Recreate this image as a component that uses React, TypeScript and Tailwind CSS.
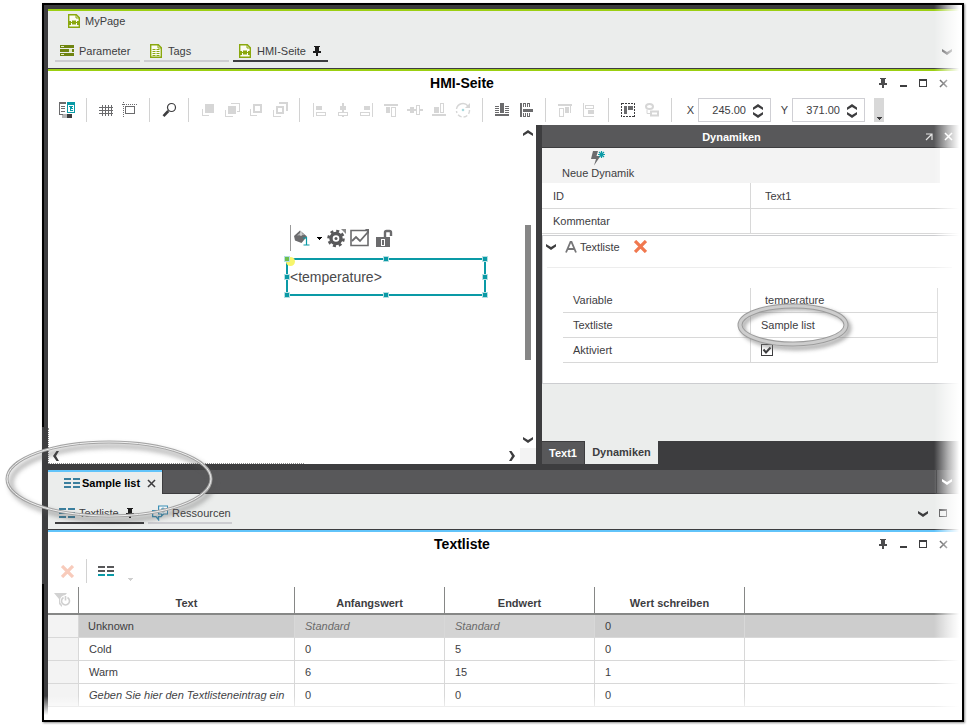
import type { ReactNode } from "react";

const GREY = "#6b6b6d";
const LIGHT = "#d6d6d6";
const DARK = "#3d3d3f";
const TEAL = "#0a9aa6";
const OLIVE = "#8aa80e";

function Icon({ children, w = 16, h = 16, smooth = false }: { children: ReactNode; w?: number; h?: number; smooth?: boolean }) {
  return (
    <svg
      width={w}
      height={h}
      viewBox={`0 0 ${w} ${h}`}
      fill="none"
      shapeRendering={smooth ? "auto" : "crispEdges"}
      className="block shrink-0"
      aria-hidden="true"
    >
      {children}
    </svg>
  );
}

function PageIcon() {
  return (
    <Icon w={12} h={14} smooth>
      <path d="M.7.7h7.6l3 3v9.6H.7z" stroke={OLIVE} strokeWidth="1.4" fill="#fbfcf3" />
      <path d="M8 .7v3.300h3.500" stroke={OLIVE} />
      <path d="M1 7h2v4H1zM9 7h2v4H9zM4 6.500h4v4H4z" fill={OLIVE} />
      <path d="M3 8.500h1M8 8.500h1" stroke={OLIVE} />
    </Icon>
  );
}

function ParameterIcon() {
  return (
    <Icon w={14} h={12}>
      <path d="M0 0h14v3H0zM0 4h14v3H0zM0 8h14v3H0z" fill="#6f8410" />
      <path d="M1 1h3v1H1zM9 4h3v3H9zM1 9h3v1H1z" fill="#e3ebc3" />
    </Icon>
  );
}

function TagsIcon() {
  return (
    <Icon w={12} h={14} smooth>
      <path d="M.7.7h7.6l3 3v9.6H.7z" stroke={OLIVE} strokeWidth="1.4" fill="#fbfcf3" />
      <path d="M8 .7v3.300h3.500" stroke={OLIVE} />
      <path d="M2.500 5.500h3M6.500 5.500h3M2.500 7.500h3M6.500 7.500h3M2.500 9.500h3M6.500 9.500h3M2.500 11.500h3M6.500 11.500h3" stroke={OLIVE} />
    </Icon>
  );
}

function Pin({ color = DARK }: { color?: string }) {
  return (
    <Icon w={8} h={10}>
      <path d="M1 0h6v1H1zM2 1h4v4H2zM0 5h8v2H0zM3 7h2v3H3z" fill={color} />
    </Icon>
  );
}

function Chevron({ dir, color = DARK }: { dir: "up" | "down" | "left" | "right"; color?: string }) {
  const d = {
    up: "M0 8V5.500L5 2l5 3.500V8L5 5z",
    down: "M0 2v2.500L5 8l5-3.500V2L5 5z",
    left: "M8 0H5.500L2 5l3.500 5H8L5 5z",
    right: "M2 0h2.500L8 5l-3.500 5H2l3-5z",
  }[dir];
  return (
    <Icon w={10} h={10} smooth>
      <path d={d} fill={color} />
    </Icon>
  );
}

function Cross({ color, size = 12, stroke = 4 }: { color: string; size?: number; stroke?: number }) {
  return (
    <svg width={size} height={size} viewBox="0 0 12 12" className="block shrink-0" aria-hidden="true">
      <path d="M2 2l8 8M10 2l-8 8" stroke={color} strokeWidth={stroke} strokeLinecap="square" />
    </svg>
  );
}

function ListIcon({ top = "#3a7f9e", bottom = "#3a7f9e" }: { top?: string; bottom?: string }) {
  return (
    <Icon w={16} h={10}>
      <path d="M0 0h7v2H0zM9 0h7v2H9zM0 4h7v2H0zM9 4h7v2H9z" fill={top} />
      <path d="M0 8h7v2H0zM9 8h7v2H9z" fill={bottom} />
    </Icon>
  );
}

const tools: { label: string; off?: boolean; art: ReactNode }[][] = [
  [
    {
      label: "Vorlage",
      art: (
        <Icon>
          <path d="M0 0h7v2H1v10h6v1H0zM2 4h4v1H2zM2 6h4v1H2zM2 9h4v1H2z" fill={GREY} />
          <path d="M8 0h8v11h-8V2h1v8h6V3H9z" fill={TEAL} />
          <path d="M10 4h4v1h-1v1h-1v3h-1V5h-1zM12 6h2v1h-2zM12 8h2v1h-2z" fill={TEAL} />
          <rect x="3" y="12" width="10" height="4" rx="2" fill="#b5b5b5" />
          <rect x="8" y="12" width="5" height="4" rx="1" fill={DARK} />
        </Icon>
      ),
    },
  ],
  [
    {
      label: "Raster",
      art: (
        <Icon>
          <path d="M4.500 3v11M7.500 3v11M10.500 3v11M13.500 3v11M1 5.500h14M1 8.500h14M1 11.500h14" stroke={GREY} />
        </Icon>
      ),
    },
    {
      label: "Fangen",
      art: (
        <Icon>
          <path d="M3 4h10v1H3zM3 4h1v8H3zM12 4h1v8h-1zM3 11h10v1H3z" fill={GREY} />
          <path d="M0 2.500h16M1.500 0v16" stroke={GREY} strokeDasharray="1 1" />
        </Icon>
      ),
    },
  ],
  [
    {
      label: "Zoom",
      art: (
        <Icon smooth>
          <circle cx="10.500" cy="5.500" r="4" stroke={DARK} strokeWidth="1.200" />
          <path d="M7.300 9L2.500 14.200" stroke={DARK} strokeWidth="2.600" />
        </Icon>
      ),
    },
  ],
  [
    {
      label: "Ganz nach vorne",
      off: true,
      art: (
        <Icon>
          <path d="M5 2h9v9H5z" fill={LIGHT} />
          <path d="M2 7h1v6h6v1H2z" fill={LIGHT} />
        </Icon>
      ),
    },
    {
      label: "Nach vorne",
      off: true,
      art: (
        <Icon>
          <path d="M4 4h8v8H4zM7 1h9v9h-3V9h2V2H7zM1 8h1v6h7v1H1z" fill={LIGHT} />
        </Icon>
      ),
    },
    {
      label: "Nach hinten",
      off: true,
      art: (
        <Icon>
          <path d="M5 2h9v9H5zm2 2v5h5V4z" fillRule="evenodd" fill={LIGHT} />
          <path d="M2 7h1v6h6v1H2z" fill={LIGHT} />
        </Icon>
      ),
    },
    {
      label: "Ganz nach hinten",
      off: true,
      art: (
        <Icon>
          <path d="M4 4h8v8H4zm2 2v4h4V6z" fillRule="evenodd" fill={LIGHT} />
          <path d="M7 0h9v9h-2V2H7zM1 8h1v6h7v1H1z" fill={LIGHT} />
        </Icon>
      ),
    },
  ],
  [
    {
      label: "Links ausrichten",
      off: true,
      art: (
        <Icon>
          <path d="M2 1h1v14H2zM5 4h6v4H5z" fill={LIGHT} />
          <path d="M5.500 10.500h9v3h-9z" stroke={LIGHT} />
        </Icon>
      ),
    },
    {
      label: "Horizontal zentrieren",
      off: true,
      art: (
        <Icon>
          <path d="M5 4h6v4H5zM7 1h2v3H7zM7 8h2v2H7zM7 13h2v2H7z" fill={LIGHT} />
          <path d="M3.500 10.500h9v3h-9z" stroke={LIGHT} />
        </Icon>
      ),
    },
    {
      label: "Rechts ausrichten",
      off: true,
      art: (
        <Icon>
          <path d="M13 1h1v14h-1zM5 4h6v4H5z" fill={LIGHT} />
          <path d="M1.500 10.500h9v3h-9z" stroke={LIGHT} />
        </Icon>
      ),
    },
    {
      label: "Oben ausrichten",
      off: true,
      art: (
        <Icon>
          <path d="M1 2h14v2H1zM3 5h4v6H3z" fill={LIGHT} />
          <path d="M8.500 5.500h4v9h-4z" stroke={LIGHT} />
        </Icon>
      ),
    },
    {
      label: "Vertikal zentrieren",
      off: true,
      art: (
        <Icon>
          <path d="M3 5h4v6H3zM0 7h3v2H0zM7 7h2v2H7zM13 7h3v2h-3z" fill={LIGHT} />
          <path d="M9.500 3.500h3v9h-3z" stroke={LIGHT} />
        </Icon>
      ),
    },
    {
      label: "Unten ausrichten",
      off: true,
      art: (
        <Icon>
          <path d="M1 12h14v2H1zM3 5h5v6H3z" fill={LIGHT} />
          <path d="M9.500 1.500h3v9h-3z" stroke={LIGHT} />
        </Icon>
      ),
    },
    {
      label: "Drehen",
      off: true,
      art: (
        <Icon smooth>
          <path d="M1.500 7A6.500 6.500 0 0 1 13 4" stroke={LIGHT} strokeWidth="1.400" />
          <path d="M15 1v5h-5z" fill={LIGHT} />
          <path d="M14.500 8A6.500 6.500 0 0 1 1.500 9" stroke={LIGHT} strokeWidth="1.400" strokeDasharray="4 2" />
          <circle cx="8" cy="8" r="1.300" fill="#a9d9dd" />
        </Icon>
      ),
    },
  ],
  [
    {
      label: "Gleiche Breite",
      art: (
        <Icon>
          <path d="M1 12h14v2H1zM6 1h4v10H6z" fill={GREY} />
          <path d="M1 4h4v1H1zM1 6h4v1H1zM1 8h4v1H1zM1 10h4v1H1zM11 4h4v1h-4zM11 6h4v1h-4zM11 8h4v1h-4zM11 10h4v1h-4z" fill={GREY} />
        </Icon>
      ),
    },
    {
      label: "Gleiche Höhe",
      art: (
        <Icon>
          <path d="M2 1h2v14H2zM5 7h10v3H5z" fill={GREY} />
          <path d="M5 1h1v4H5zM7 1h1v4H7zM9 1h1v4H9zM11 1h1v4h-1zM5 1h3v1H5zM9 1h3v1H9zM5 11h1v4H5zM7 11h1v4H7zM9 11h1v4H9zM11 11h1v4h-1zM5 14h3v1H5zM9 14h3v1H9z" fill={GREY} />
        </Icon>
      ),
    },
  ],
  [
    {
      label: "Horizontal verteilen",
      off: true,
      art: (
        <Icon>
          <path d="M1 2h14v2H1zM8 5h4v6H8zM13 4h1v7h-1z" fill={LIGHT} />
          <path d="M2.500 6.500h4v8h-4z" stroke={LIGHT} />
        </Icon>
      ),
    },
    {
      label: "Vertikal verteilen",
      off: true,
      art: (
        <Icon>
          <path d="M2 1h1v14H2zM7 8h6v4H7zM3 14h10v1H3z" fill={LIGHT} />
          <path d="M4.500 3.500h8v3h-8z" stroke={LIGHT} />
        </Icon>
      ),
    },
  ],
  [
    {
      label: "Gruppieren",
      art: (
        <Icon>
          <path d="M1.500 1.500h13v13h-13z" stroke={DARK} strokeDasharray="2 1" />
          <path d="M4 4h3v8H4zM8 4h5v4H8z" fill={GREY} />
        </Icon>
      ),
    },
    {
      label: "Gruppierung aufheben",
      off: true,
      art: (
        <Icon smooth>
          <ellipse cx="5.500" cy="4.500" rx="3.500" ry="2.500" stroke={LIGHT} strokeWidth="2" />
          <path d="M7 9.500h7v4H7z" stroke={LIGHT} strokeWidth="2" />
          <path d="M3 8v3.500h3" stroke={LIGHT} />
        </Icon>
      ),
    },
  ],
];

function Separator() {
  return <span className="mx-[11px] h-6 w-px shrink-0 bg-[#d2d2d2]" />;
}

function Coordinate({ id, value }: { id: string; value: string }) {
  return (
    <>
      <label htmlFor={id} className="w-[15px] shrink-0 text-center">
        {id}
      </label>
      <div className="flex h-6 w-[73px] shrink-0 items-center border border-[#cfcfd4] bg-white">
        <input id={id} defaultValue={value} className="min-w-0 flex-1 bg-transparent text-right outline-none" />
        <div className="flex w-6 shrink-0 flex-col items-center">
          <button aria-label={`${id} erhöhen`} className="h-2">
            <Chevron dir="up" />
          </button>
          <button aria-label={`${id} verringern`} className="h-2">
            <Chevron dir="down" />
          </button>
        </div>
      </div>
    </>
  );
}

function PaneTitle({ children }: { children: ReactNode }) {
  return (
    <div className="flex h-6 items-center pl-[3px] pr-[9px]">
      <h2 className="flex-1 text-center text-sm font-bold text-black">{children}</h2>
      <button aria-label="Anheften" className="flex w-5 justify-center">
        <Pin color="#4c4c4e" />
      </button>
      <button aria-label="Minimieren" className="flex w-5 justify-center pt-[5px]">
        <span className="h-[2px] w-[7px] bg-[#3d3d3f]" />
      </button>
      <button aria-label="Maximieren" className="flex w-5 justify-center">
        <span className="size-2 border border-t-2 border-[#3d3d3f]" />
      </button>
      <button aria-label="Schließen" className="flex w-5 justify-center">
        <Cross color="#3d3d3f" size={9} stroke={2} />
      </button>
    </div>
  );
}

function SubTab({ icon, label, active = false, wide }: { icon: ReactNode; label: string; active?: boolean; wide: string }) {
  return (
    <button className={`flex h-5 items-center border-b-2 ${wide} ${active ? "border-[#3d3d3f]" : "border-[#cdcdd1]"}`}>
      <span className="flex w-6 justify-center">{icon}</span>
      <span>{label}</span>
      {active && (
        <span className="ml-[7px]">
          <Pin color="#1c1c1c" />
        </span>
      )}
    </button>
  );
}

const handles = [
  "-left-[4px] -top-[4px]",
  "left-[95px] -top-[4px]",
  "-right-[4px] -top-[4px]",
  "-left-[4px] top-[14px]",
  "-right-[4px] top-[14px]",
  "-left-[4px] -bottom-[4px]",
  "left-[95px] -bottom-[4px]",
  "-right-[4px] -bottom-[4px]",
];

function Canvas() {
  return (
    <div className="flex min-w-0 flex-1 flex-col bg-white">
      <div className="flex flex-1">
        <div className="relative flex-1">
          <div className="absolute left-[242px] top-[100px] flex h-[26px] items-center border-l border-[#9a9a9a] pl-[3px]">
            <button aria-label="Füllfarbe">
              <Icon smooth>
                <path d="M0 6L6 .5l7 6L7.500 13 1 10.500z" fill={GREY} />
                <path d="M3 5.500L7 2l3.500 3z" fill="#b4b4b4" />
                <path d="M7 1v5" stroke="#e8e8e8" />
                <path d="M9 8h4M12.500 7v8M9.500 15h6" stroke={TEAL} strokeWidth="1.200" />
              </Icon>
            </button>
            <button aria-label="Füllfarbe wählen" className="ml-[6px] mr-[5px]">
              <Icon w={6} h={3}>
                <path d="M0 0h6L3 3z" fill="#000" />
              </Icon>
            </button>
            <button aria-label="Einstellungen">
              <Icon w={20} h={20} smooth>
                <circle cx="9" cy="10.500" r="5" stroke="#58585a" strokeWidth="3.400" />
                <circle cx="9" cy="10.500" r="7.500" stroke="#58585a" strokeWidth="2.600" strokeDasharray="3 2.890" />
                <circle cx="9" cy="10.500" r="1.500" fill="#58585a" />
                <path d="M14 1h5v5z" fill="#8a8a8a" />
              </Icon>
            </button>
            <button aria-label="Dynamisieren" className="ml-[3px]">
              <Icon w={20} h={20} smooth>
                <path d="M1 2.500h17v15H1z" stroke={GREY} strokeWidth="1.600" />
                <path d="M2 13l4-4 4 4 8-9" stroke={GREY} strokeWidth="1.800" />
                <path d="M15 1h4v5z" fill={GREY} />
              </Icon>
            </button>
            <button aria-label="Entsperren" className="ml-[5px]">
              <Icon w={18} h={20} smooth>
                <path d="M1 9h14v10H1z" fill={GREY} />
                <path d="M10 10V4.500a1.500 1.500 0 0 1 1.500-1.500h3a1.500 1.500 0 0 1 1.500 1.500V8" stroke={GREY} strokeWidth="2.400" />
                <path d="M6 11h4v7H6z" fill="#fff" />
                <path d="M7 12h2v5H7z" fill={GREY} />
              </Icon>
            </button>
          </div>
          <div className="absolute left-[238px] top-[133px] flex h-[38px] w-[200px] items-center border-2 border-[#0a9aa6] pl-[2px]">
            <span className="absolute -left-[2px] -top-[3px] size-[9px] rounded-full bg-[#f7f56b]" />
            <span className="text-sm text-[#4a4a4c]">&lt;temperature&gt;</span>
            {handles.map((place, i) => (
              <span
                key={place}
                className={`absolute size-[6px] border border-[#b5dfe2] ${i === 0 ? "bg-[#6cc04a]" : "bg-[#0a9aa6]"} ${place}`}
              />
            ))}
          </div>
        </div>
        <div className="flex w-4 flex-col items-center">
          <button aria-label="Nach oben scrollen" className="flex h-4 items-center">
            <Chevron dir="up" />
          </button>
          <span className="mt-[84px] h-[135px] w-[6px] bg-[#868686]" />
          <button aria-label="Nach unten scrollen" className="mt-auto flex h-4 items-center">
            <Chevron dir="down" />
          </button>
        </div>
      </div>
      <div className="relative flex h-4 items-center pl-[3px]">
        <span className="absolute bottom-0 left-0 h-9 w-64 border-b border-l border-dotted border-[#8b8b8b]" />
        <button aria-label="Nach links scrollen">
          <Chevron dir="left" />
        </button>
        <span className="flex-1" />
        <button aria-label="Nach rechts scrollen">
          <Chevron dir="right" />
        </button>
        <span className="ml-[3px] h-4 w-4 bg-[#f3f3f3]" />
      </div>
    </div>
  );
}

function SampleMarker() {
  return (
    <svg className="pointer-events-none absolute -left-[26px] -top-[16px] z-10" width="126" height="60" aria-hidden="true">
      <defs>
        <filter id="soft-small" x="-20%" y="-20%" width="140%" height="140%">
          <feGaussianBlur stdDeviation="2" />
        </filter>
      </defs>
      <ellipse cx="61" cy="31" rx="53" ry="20" fill="none" stroke="#777" strokeWidth="4" opacity="0.700" filter="url(#soft-small)" />
      <ellipse cx="58" cy="28" rx="53" ry="19" fill="none" stroke="#9c9c9c" strokeWidth="5" />
      <ellipse cx="58" cy="28" rx="53" ry="19" fill="none" stroke="#cdcdcd" strokeWidth="3" />
    </svg>
  );
}

function TabMarker() {
  return (
    <svg className="pointer-events-none absolute -left-[48px] -top-[40px] z-10" width="226" height="104" aria-hidden="true">
      <defs>
        <filter id="soft-large" x="-10%" y="-20%" width="120%" height="140%">
          <feGaussianBlur stdDeviation="2.500" />
        </filter>
      </defs>
      <ellipse cx="112" cy="51" rx="101" ry="37" fill="none" stroke="#555" strokeWidth="4" opacity="0.500" filter="url(#soft-large)" />
      <ellipse cx="109" cy="47" rx="102" ry="37" fill="none" stroke="#a4a4a4" strokeWidth="3" />
      <ellipse cx="109" cy="47" rx="102" ry="37" fill="none" stroke="#f1f1f1" strokeWidth="1" />
    </svg>
  );
}

function Dynamics() {
  return (
    <aside className="flex w-[420px] shrink-0 flex-col bg-[#3d3d3f]">
      <div className="flex h-[23px] items-center border-b border-[#3d3d3f] bg-[#58585a] pr-[4px] pt-px text-white">
        <h2 className="flex-1 text-center font-bold">Dynamiken</h2>
        <button aria-label="Abdocken" className="flex w-4 justify-center">
          <Icon w={8} h={8} smooth>
            <path d="M1 1h6v6M7 1L1 7" stroke="#e4e4e4" strokeWidth="1.200" />
          </Icon>
        </button>
        <button aria-label="Schließen" className="ml-px flex w-5 justify-center">
          <Cross color="#fff" size={9} stroke={2} />
        </button>
      </div>
      <div className="bg-white pr-[22px]">
        <div className="flex h-[35px] bg-[#f3f3f3] pl-[20px]">
          <button className="flex flex-col items-center">
            <Icon w={16} h={18} smooth>
              <path d="M3 3h5L6.500 8h4L4 17.500 6 11H1z" fill={GREY} />
              <path d="M11.500 3v7M8 6.500h7M9 4l5 5M14 4l-5 5" stroke={TEAL} strokeWidth="1.200" />
            </Icon>
            <span className="leading-[14px]">Neue Dynamik</span>
          </button>
        </div>
      </div>
      <div className="bg-white">
        <div className="flex h-[26px] border-b border-[#d8d8d8]">
          <label htmlFor="prop-id" className="flex w-[208px] items-center pl-[11px]">
            ID
          </label>
          <input id="prop-id" defaultValue="Text1" className="min-w-0 flex-1 border-l border-[#d8d8d8] pl-[14px] outline-none" />
        </div>
        <div className="flex h-[25px] border-b border-[#d8d8d8]">
          <label htmlFor="prop-comment" className="flex w-[208px] items-center pl-[11px]">
            Kommentar
          </label>
          <input id="prop-comment" className="min-w-0 flex-1 border-l border-[#d8d8d8] pl-[14px] outline-none" />
        </div>
      </div>
      <div className="bg-white pt-px">
        <section className="border border-r-0 border-[#cccdd0] pb-5">
          <button className="flex h-[21px] items-center pl-[3px]">
            <Chevron dir="down" />
            <span className="ml-[9px]">
              <Icon w={12} h={12} smooth>
                <path d="M1 11.500L5.500 1h1L11 11.500M3 8h6" stroke="#767678" strokeWidth="1.800" />
              </Icon>
            </span>
            <span className="ml-[3px]">Textliste</span>
            <span className="ml-[14px]">
              <Cross color="#f0784f" size={13} stroke={3} />
            </span>
          </button>
          <div className="ml-[4px] mr-[10px] mt-[10px] border-t border-[#ededed]" />
          <div className="ml-5 mr-[24px] mt-5 border-r border-[#d8d8d8]">
            <div className="flex h-[25px] border-b border-[#d8d8d8]">
              <label htmlFor="prop-variable" className="flex w-[187px] items-center pl-[10px]">
                Variable
              </label>
              <input
                id="prop-variable"
                defaultValue="temperature"
                className="min-w-0 flex-1 border-l border-[#d8d8d8] pl-[14px] outline-none"
              />
            </div>
            <div className="flex h-[25px] border-b border-[#d8d8d8]">
              <label htmlFor="prop-list" className="flex w-[187px] items-center pl-[10px]">
                Textliste
              </label>
              <div className="relative flex flex-1 border-l border-[#d8d8d8] pl-[10px]">
                <input id="prop-list" defaultValue="Sample list" className="min-w-0 flex-1 outline-none" />
                <span className="absolute left-[10px] top-0">
                  <SampleMarker />
                </span>
              </div>
            </div>
            <div className="flex h-[25px] border-b border-[#d8d8d8]">
              <label htmlFor="prop-active" className="flex w-[187px] items-center pl-[10px]">
                Aktiviert
              </label>
              <div className="flex flex-1 items-center border-l border-[#d8d8d8] pl-[10px]">
                <span className="grid size-3">
                  <input
                    id="prop-active"
                    type="checkbox"
                    defaultChecked
                    className="peer col-start-1 row-start-1 size-3 appearance-none border border-[#3d3d3f] bg-white"
                  />
                  <svg className="pointer-events-none col-start-1 row-start-1 hidden size-3 peer-checked:block" viewBox="0 0 12 12" fill="none">
                    <path d="M2.500 5.500L5 8.500l4.500-5" stroke={DARK} strokeWidth="2" />
                  </svg>
                </span>
              </div>
            </div>
          </div>
        </section>
      </div>
      <div className="h-[57px] bg-[#ebedec]" />
      <div className="flex h-[23px] font-bold">
        <button className="mt-px w-[43px] border-r border-[#3d3d3f] bg-[#58585a] text-white">Text1</button>
        <button className="w-[73px] bg-[#ebedec] pb-[2px]">Dynamiken</button>
      </div>
    </aside>
  );
}

const rows = [
  { text: "Cold", from: "0", to: "5", write: "0" },
  { text: "Warm", from: "6", to: "15", write: "1" },
  { text: "Geben Sie hier den Textlisteneintrag ein", from: "0", to: "0", write: "0", hint: true },
];

function EntryTable() {
  return (
    <table className="w-full table-fixed border-separate border-spacing-0 text-left">
      <colgroup>
        <col className="w-[31px]" />
        <col className="w-[216px]" />
        <col className="w-[150px]" />
        <col className="w-[150px]" />
        <col className="w-[150px]" />
        <col />
      </colgroup>
      <thead>
        <tr className="h-7 text-center [&>th]:border-b-2 [&>th]:border-[#868786] [&>th]:p-0 [&>th]:pt-[6px]">
          <th className="border-r">
            <div className="-mt-[6px] ml-[6px]">
              <Icon w={18} h={16} smooth>
                <path d="M0 1h13L8 7v8l-3-3V7z" fill="#d2d2d2" />
                <circle cx="11.500" cy="8.500" r="5.500" fill="#fff" />
                <path d="M9.500 5.500a4 4 0 1 0 4 0M11.500 4v4.500" stroke="#cfcfcf" strokeWidth="1.600" />
              </Icon>
            </div>
          </th>
          <th className="border-r">Text</th>
          <th className="border-r">Anfangswert</th>
          <th className="border-r">Endwert</th>
          <th className="border-r">Wert schreiben</th>
          <th />
        </tr>
      </thead>
      <tbody className="[&_td]:h-[23px] [&_td]:border-[#d8d8d8] [&_td]:py-0">
        <tr className="[&>td]:border-b">
          <td className="border-r bg-[#f3f3f3]" />
          <td className="border-r bg-[#cdcdcd] pl-[9px]">Unknown</td>
          <td className="border-r bg-[#d4d4d4] pl-[10px] italic text-[#6a6a6a]">Standard</td>
          <td className="border-r bg-[#d4d4d4] pl-[10px] italic text-[#6a6a6a]">Standard</td>
          <td className="border-r bg-[#cdcdcd] pl-[10px]">0</td>
          <td className="bg-[#cdcdcd]" />
        </tr>
        {rows.map((row) => (
          <tr key={row.text} className="[&>td]:border-b">
            <td className="border-r bg-[#f3f3f3]" />
            <td className={`whitespace-nowrap border-r pl-[10px] ${row.hint ? "italic" : ""}`}>{row.text}</td>
            <td className="border-r pl-[10px]">{row.from}</td>
            <td className="border-r pl-[10px]">{row.to}</td>
            <td className="border-r pl-[10px]">{row.write}</td>
            <td />
          </tr>
        ))}
      </tbody>
    </table>
  );
}

export default function App() {
  return (
    <div className="flex min-h-screen bg-white pb-[4px] pl-[42px] pr-[4px] pt-[3px] font-['Liberation_Sans',Arial,sans-serif] text-[11px] leading-[14px] text-[#3d3d3f]">
      <div className="relative flex min-w-0 flex-1 border-2 border-black shadow-[1px_1px_2px_rgba(0,0,0,0.45)]">
        <span className="absolute -left-[2px] top-[422px] h-[157px] w-[2px] bg-[#3d3d3f]" />
        <div className="flex min-w-0 flex-1 flex-col border-l-4 border-t-4 border-[#3d3d3f]">
          <header className="border-t-2 border-[#9bcf12] bg-[#ebedec]">
            <div className="flex h-5 items-center gap-[5px] pl-5">
              <PageIcon />
              <h1>MyPage</h1>
            </div>
            <nav className="flex h-[38px] items-start border-b border-[#3d3d3f] pl-[7px] pt-[11px]">
              <div className="flex flex-1 gap-[4px]">
                <SubTab icon={<ParameterIcon />} label="Parameter" wide="w-[85px]" />
                <SubTab icon={<TagsIcon />} label="Tags" wide="w-[85px]" />
                <SubTab icon={<PageIcon />} label="HMI-Seite" wide="w-[95px]" active />
              </div>
              <button aria-label="Weitere Seiten" className="mr-[10px] mt-[5px]">
                <Chevron dir="down" />
              </button>
            </nav>
          </header>

          <main className="flex flex-1 flex-col">
            <section className="border-t-2 border-[#9bcf12]">
              <PaneTitle>HMI-Seite</PaneTitle>
              <div className="flex h-[30px] items-center pl-[11px]" role="toolbar">
                {tools.map((group, g) => (
                  <div key={g} className="flex shrink-0 items-center">
                    <div className="flex gap-2">
                      {group.map((tool) => (
                        <button key={tool.label} aria-label={tool.label} disabled={tool.off}>
                          {tool.art}
                        </button>
                      ))}
                    </div>
                    <Separator />
                  </div>
                ))}
                <Coordinate id="X" value="245.00" />
                <span className="w-[6px] shrink-0" />
                <Coordinate id="Y" value="371.00" />
                <button aria-label="Symbolleistenoptionen" className="ml-[9px] flex h-6 w-[10px] shrink-0 items-end justify-center bg-[#d8d8d8] pb-[2px]">
                  <Icon w={6} h={3}>
                    <path d="M0 0h6L3 3z" fill={DARK} />
                  </Icon>
                </button>
              </div>
              <div className="flex border-b-[6px] border-[#3d3d3f]">
                <Canvas />
                <div className="w-[6px] shrink-0 bg-[#3d3d3f]" />
                <Dynamics />
              </div>
            </section>

            <section>
              <div className="flex h-6 border-b border-[#3d3d3f] bg-[#58585a]">
                <div className="relative -mb-px flex w-[114px] items-center border-t-2 border-[#62c4fa] bg-[#ebedec] pl-[16px]">
                  <button className="flex items-center gap-[2px] font-bold text-black">
                    <ListIcon />
                    Sample list
                  </button>
                  <button aria-label="Tab schließen" className="ml-[7px]">
                    <Cross color="#3d3d3f" size={9} stroke={2} />
                  </button>
                  <TabMarker />
                </div>
                <span className="w-px bg-[#3d3d3f]" />
                <span className="flex-1" />
                <button aria-label="Weitere Tabs" className="flex w-[26px] items-center justify-center border-l border-[#3d3d3f] pr-[6px]">
                  <Chevron dir="down" color="#fff" />
                </button>
              </div>
              <nav className="flex h-9 items-start border-b border-[#3d3d3f] bg-[#ebedec] pl-[7px] pt-[10px]">
                <div className="flex flex-1 gap-[4px]">
                  <SubTab icon={<ListIcon />} label="Textliste" wide="w-[89px]" active />
                  <SubTab
                    icon={
                      <Icon smooth>
                        <path d="M6.600 1h9v8h-4l-2 2V9h-3z" stroke="#3a8fb5" strokeWidth="1.200" fill="#f4f8fa" />
                        <path d="M11 2.500v5M9 4h4M9.500 7l3-3M12.500 7l-3-3" stroke="#3a8fb5" />
                        <path d="M5 5.600H.6v6H4l2.500 3v-3H9" stroke="#3a8fb5" strokeWidth="1.400" />
                      </Icon>
                    }
                    label="Ressourcen"
                    wide="w-[84px]"
                  />
                </div>
                <button aria-label="Weitere Ansichten" className="mt-[5px]">
                  <Chevron dir="down" />
                </button>
                <button aria-label="Maximieren" className="ml-[11px] mr-[15px] mt-[5px]">
                  <span className="block size-2 border border-t-2 border-[#3d3d3f]" />
                </button>
              </nav>
              <div className="border-t-2 border-[#62c4fa]">
                <PaneTitle>Textliste</PaneTitle>
                <div className="mt-[3px] flex h-7 items-start pl-[13px]" role="toolbar">
                  <button aria-label="Eintrag löschen" disabled className="mt-[6px]">
                    <Cross color="#f8cbbb" size={13} stroke={3} />
                  </button>
                  <span className="ml-3 mr-[11px] h-6 w-px bg-[#d2d2d2]" />
                  <button aria-label="Eintrag einfügen" className="mt-[7px]">
                    <ListIcon top="#58585a" bottom={TEAL} />
                  </button>
                  <button aria-label="Symbolleistenoptionen" className="ml-[13px] mt-[19px]">
                    <Icon w={6} h={3}>
                      <path d="M0 0h6L3 3z" fill="#cfcfcf" />
                    </Icon>
                  </button>
                </div>
                <EntryTable />
              </div>
            </section>
          </main>
        </div>
        <div className="pointer-events-none absolute inset-y-0 right-0 w-7 bg-linear-to-r from-transparent via-white/60 to-white to-90%" />
        <div className="pointer-events-none absolute inset-x-0 bottom-0 h-6 bg-linear-to-b from-transparent to-white to-80%" />
      </div>
    </div>
  );
}
